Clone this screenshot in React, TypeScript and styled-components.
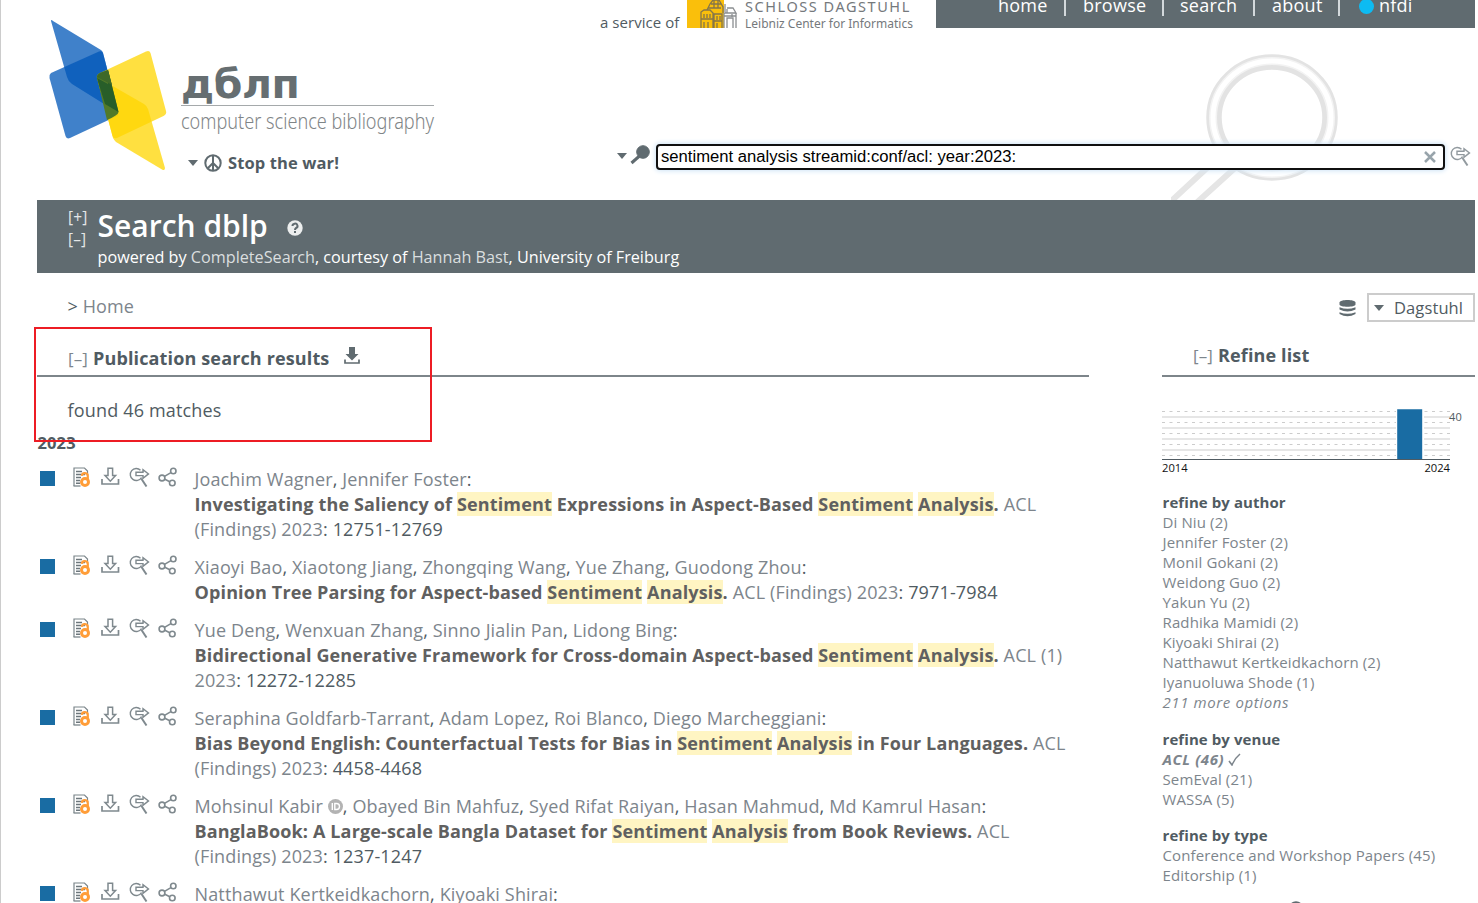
import React from "react";
import styled, { createGlobalStyle } from "styled-components";

const slate = "#606b70";
const text = "#505b62";
const link = "#7d858c";

const Global = createGlobalStyle`
  * { box-sizing: border-box; }
  body { margin: 0; background: #fff; overflow: hidden; }
`;

const Page = styled.div`
  position: relative;
  width: 1478px;
  height: 903px;
  overflow: hidden;
  padding-right: 3px;
  border-left: 1px solid #ccc;
  background: #fff;
  color: ${text};
  font-family: "Open Sans", "Noto Sans", sans-serif;
  font-size: 18px;
  line-height: 25px;
  letter-spacing: 0.11px;
  white-space: nowrap;
`;

const Header = styled.header`
  position: relative;
  display: flex;
  height: 200px;
  padding-left: 48px;
`;

const Lens = styled.svg`
  position: absolute;
  right: 134px;
  top: 50px;
`;

const Emblem = styled.svg`
  flex: none;
  margin-top: 19px;
`;

const Brand = styled.div`
  width: 432px;
  flex: none;
  padding: 60px 0 0 13px;
`;

const Wordmark = styled.div`
  width: 253px;
  height: 46px;
  border-bottom: 1px solid #a5a9ab;
  color: #666e71;
  font-family: "DejaVu Sans", sans-serif;
  font-size: 41px;
  font-weight: 700;
  line-height: 48px;
  letter-spacing: -0.4px;
`;

const Tagline = styled.div`
  color: #7f8587;
  font-family: "Noto Sans", "Open Sans", sans-serif;
  font-weight: 300;
  font-size: 21px;
  line-height: 30px;
  letter-spacing: 0;
  transform-origin: 0 50%;
  transform: scaleX(0.862);
`;

const WarLink = styled.div`
  display: flex;
  align-items: center;
  gap: 6px;
  margin: 13px 0 0 7px;
  font-size: 16.5px;
  line-height: 27px;
  font-weight: 700;
`;

const Right = styled.div`
  position: relative;
  flex: 1;
  display: flex;
  flex-direction: column;
  justify-content: space-between;
`;

const TopBar = styled.div`
  display: flex;
  height: 28px;
`;

const Service = styled.span`
  width: 87px;
  font-size: 15px;
  line-height: 20px;
  padding-top: 12px;
  letter-spacing: 0.05px;
`;

const Castle = styled.svg`
  flex: none;
`;

const SponsorText = styled.div`
  width: 192px;
  height: 28px;
  overflow: hidden;
  color: #75797c;
  font-family: "Noto Sans", sans-serif;
`;

const SponsorName = styled.div`
  margin: -3px 0 0 1px;
  font-size: 14.5px;
  line-height: 18px;
  letter-spacing: 1.55px;
`;

const SponsorSub = styled.div`
  margin-left: 1px;
  font-size: 12px;
  line-height: 17px;
  letter-spacing: 0;
`;

const Nav = styled.nav`
  flex: 1;
  display: flex;
  background: ${slate};
  color: #fff;
  padding-left: 62px;
  line-height: 10px;
  letter-spacing: 0.25px;
`;

const NavItem = styled.span<{ $w: number }>`
  width: ${(p) => p.$w}px;
`;

const Divider = styled.span<{ $w: number }>`
  width: ${(p) => p.$w}px;
  &::before {
    content: "";
    display: block;
    width: 2px;
    height: 16px;
    background: #d3d9dc;
  }
`;

const Dot = styled.span`
  width: 15px;
  height: 15px;
  margin: -1px 5px 0 1px;
  border-radius: 50%;
  background: #0dbbf2;
`;

const SearchRow = styled.div`
  display: flex;
  align-items: flex-start;
  height: 56px;
  padding-left: 17px;
`;

const Caret = styled.i`
  flex: none;
  border: 5.5px solid transparent;
  border-top: 6px solid ${slate};
  border-bottom: 0;
`;

const SearchCaret = styled(Caret)`
  margin: 9px 2px 0 0;
`;

const SearchField = styled.div`
  display: flex;
  align-items: center;
  justify-content: space-between;
  width: 789px;
  height: 26px;
  margin: 0 5px;
  padding: 0 7px 1px 3px;
  border: 2px solid #101010;
  border-radius: 4px;
  background: #fff;
  box-shadow: 0 0 5px 1px #cfe4f6;
  color: #000;
  font-family: "Liberation Sans", sans-serif;
  font-size: 16.65px;
  letter-spacing: 0;
`;

const Goto = styled.span`
  height: 21px;
  padding-top: 2px;
  line-height: 0;
  color: #929a9f;
`;

const Band = styled.section`
  display: flex;
  height: 73px;
  margin-left: 36px;
  padding: 6px 0 0 31px;
  background: ${slate};
  color: #fff;
`;

const Toggles = styled.div`
  width: 29.5px;
  font-size: 15.5px;
  line-height: 22px;
  color: #e4e7e8;
`;

const BandTitle = styled.h1`
  display: flex;
  align-items: center;
  gap: 19px;
  margin: 0;
  font-size: 30px;
  line-height: 40px;
  font-weight: 600;
  letter-spacing: 0;
  svg { margin-top: 4px; }
`;

const Powered = styled.div`
  font-size: 16.2px;
  line-height: 22px;
  letter-spacing: 0;
  a { color: #dadedf; }
`;

const Crumbs = styled.div`
  display: flex;
  justify-content: space-between;
  height: 54px;
  padding: 20px 0 0 66.5px;
  line-height: 27px;
`;

const Mirror = styled.div`
  display: flex;
  align-items: center;
  gap: 11px;
  height: 29px;
`;

const Select = styled.div`
  display: flex;
  align-items: center;
  gap: 10px;
  width: 108px;
  height: 29px;
  padding-left: 5px;
  border: 2px solid #ccc;
  font-size: 16.5px;
`;

const Muted = styled.span`
  color: ${link};
`;

const Columns = styled.main`
  display: flex;
  justify-content: space-between;
  padding-left: 36px;
`;

const Results = styled.section`
  width: 1052px;
`;

const SectionHead = styled.h2<{ $top: number }>`
  display: flex;
  align-items: center;
  height: 50px;
  margin: 0;
  padding: ${(p) => p.$top}px 0 0 31px;
  border-bottom: 2px solid #7d858a;
  font-size: 18px;
  font-weight: 700;
  letter-spacing: 0.14px;
`;

const Fold = styled.span`
  width: 25px;
  color: ${link};
  font-size: 17px;
  font-weight: 400;
`;

const DownloadIcon = styled.svg`
  margin: -6px 0 0 15px;
`;

const Found = styled.p`
  margin: 21px 0 0 30.5px;
  letter-spacing: 0.17px;
`;

const Year = styled.h3`
  margin: 8px 0 11px 0.5px;
  font-size: 16.5px;
  line-height: 24px;
`;

const Entry = styled.article`
  display: flex;
  margin-bottom: 13px;
`;

const Mark = styled.span`
  width: 15px;
  height: 15px;
  margin: 5px 16px 0 3px;
  background: #196ca3;
`;

const Icons = styled.div`
  display: flex;
  gap: 8.500px;
  width: 123.5px;
  padding: 1px 0 0 0.5px;
  color: #7f898e;
`;

const Cite = styled.div`
  padding-top: 1px;
  margin-bottom: -1px;
  color: ${text};
  letter-spacing: 0.145px;
  b { color: #606060; }
  mark { background: #fff5c3; color: inherit; }
`;

const Orcid = styled.svg`
  vertical-align: -1px;
`;

const Refine = styled.aside`
  width: 313px;
`;

const ChartRow = styled.div`
  display: flex;
  align-items: flex-start;
  margin-top: 31px;
  height: 53px;
  font-size: 11px;
  line-height: 18px;
  svg { margin-right: -1px; }
`;

const Years = styled.div`
  display: flex;
  justify-content: space-between;
  width: 288px;
  color: #111;
  font-size: 11.2px;
  line-height: 14px;
  letter-spacing: 0;
`;

const Facets = styled.div`
  margin: 17px 0 0 0.5px;
  font-size: 15px;
  line-height: 20px;
  letter-spacing: 0.12px;
`;

const Facet = styled.div<{ $gap: number }>`
  display: flex;
  flex-direction: column;
  margin-bottom: ${(p) => p.$gap}px;
  color: ${link};
  b { color: ${text}; letter-spacing: 0.08px; }
  i, em { letter-spacing: 0.6px; }
`;

const FacetHelp = styled.b`
  display: flex;
  gap: 5px;
  svg { margin-top: -1px; }
`;

const Selected = styled.em`
  display: flex;
  align-items: center;
  gap: 4px;
  font-weight: 700;
`;

const Callout = styled.div`
  position: absolute;
  left: 33px;
  top: 327px;
  width: 398px;
  height: 115px;
  border: 2px solid #ed1c24;
`;

const Help = ({ disc, mark }: { disc: string; mark: string }) => (
  <svg width="16" height="16" viewBox="0 0 16 16">
    <circle cx="8" cy="8" r="7.700" fill={disc} />
    <path d="M5.500 6a2.500 2.300 0 1 1 3.600 2Q8 8.600 8 10M8 11v2" fill="none" stroke={mark} strokeWidth="2" />
  </svg>
);

const Export = () => (
  <svg width="20" height="20" viewBox="0 0 20 20" fill="none" stroke="currentColor" strokeWidth="1.5">
    <path d="M8 1.200h4.600v7.300h3L10.300 14.200 5 8.500h3z" />
    <path d="M2 12v5h16.500v-5" strokeWidth="1.700" />
  </svg>
);

const Ask = () => (
  <svg width="21" height="20" viewBox="0 0 21 20" fill="none" stroke="currentColor" strokeWidth="1.4">
    <path d="M11.500 3.200A6 6 0 1 0 12.500 10.500" />
    <path d="M7 5.200h7V2.600l5.500 4.300-5.500 4.300V8.600H7z" />
    <path d="M12.200 11.500l5.300 8" strokeWidth="2" />
  </svg>
);

const Share = () => (
  <svg width="20" height="20" viewBox="0 0 20 20" fill="none" stroke="currentColor" strokeWidth="1.6">
    <circle cx="4" cy="11" r="2.900" />
    <circle cx="15.300" cy="4" r="2.700" />
    <circle cx="14.300" cy="16" r="2.800" />
    <path d="M6.500 9.400l6.400-3.800M6.800 12.200l5 2.500" />
  </svg>
);

const OpenDoc = () => (
  <svg width="20" height="20" viewBox="0 0 20 20" fill="none">
    <path d="M2 19V1h10.500l3 3v5" stroke="#7b858a" strokeWidth="1.200" />
    <path d="M1.500 19h7" stroke="#7b858a" strokeWidth="1.300" />
    <path d="M4 4.500h6M4 7.500h9M4 10.500h5M4 13.500h4M4 16.200h4" stroke="#6d777c" strokeWidth="1.400" />
    <path d="M9.800 8.800a3 3 0 0 1 6 0.500V13" stroke="#ff9d38" strokeWidth="2.200" />
    <circle cx="13" cy="15" r="3.500" stroke="#ff9d38" strokeWidth="3" />
  </svg>
);

const S = () => <mark>Sentiment</mark>;
const A = () => <mark>Analysis</mark>;

const Authors = ({ names }: { names: string[] }) => (
  <>
    {names.map((n, i) => (
      <React.Fragment key={n}>
        <Muted>{n}</Muted>
        {n === "Mohsinul Kabir" && (
          <>
            {" "}
            <Orcid width="15" height="15" viewBox="0 0 15 15">
              <circle cx="7.500" cy="7.500" r="7.500" fill="#b3b3b3" />
              <path d="M4.300 4v7M6.800 4.500h1.700a2.900 2.900 0 0 1 0 6H6.800z" fill="none" stroke="#fff" strokeWidth="1.400" />
            </Orcid>
          </>
        )}
        {i < names.length - 1 ? ", " : ":"}
      </React.Fragment>
    ))}
  </>
);

const entries: { names: string[]; title: React.ReactNode; rest?: React.ReactNode }[] = [
  {
    names: ["Joachim Wagner", "Jennifer Foster"],
    title: <><b>Investigating the Saliency of <S /> Expressions in Aspect-Based <S /> <A />.</b> <Muted>ACL</Muted></>,
    rest: <><Muted>(Findings) 2023</Muted>: 12751-12769</>,
  },
  {
    names: ["Xiaoyi Bao", "Xiaotong Jiang", "Zhongqing Wang", "Yue Zhang", "Guodong Zhou"],
    title: <><b>Opinion Tree Parsing for Aspect-based <S /> <A />.</b> <Muted>ACL (Findings) 2023</Muted>: 7971-7984</>,
  },
  {
    names: ["Yue Deng", "Wenxuan Zhang", "Sinno Jialin Pan", "Lidong Bing"],
    title: <><b>Bidirectional Generative Framework for Cross-domain Aspect-based <S /> <A />.</b> <Muted>ACL (1)</Muted></>,
    rest: <><Muted>2023</Muted>: 12272-12285</>,
  },
  {
    names: ["Seraphina Goldfarb-Tarrant", "Adam Lopez", "Roi Blanco", "Diego Marcheggiani"],
    title: <><b>Bias Beyond English: Counterfactual Tests for Bias in <S /> <A /> in Four Languages.</b> <Muted>ACL</Muted></>,
    rest: <><Muted>(Findings) 2023</Muted>: 4458-4468</>,
  },
  {
    names: ["Mohsinul Kabir", "Obayed Bin Mahfuz", "Syed Rifat Raiyan", "Hasan Mahmud", "Md Kamrul Hasan"],
    title: <><b>BanglaBook: A Large-scale Bangla Dataset for <S /> <A /> from Book Reviews.</b> <Muted>ACL</Muted></>,
    rest: <><Muted>(Findings) 2023</Muted>: 1237-1247</>,
  },
  { names: ["Natthawut Kertkeidkachorn", "Kiyoaki Shirai"], title: null },
];

const authorFacets = [
  "Di Niu (2)", "Jennifer Foster (2)", "Monil Gokani (2)", "Weidong Guo (2)", "Yakun Yu (2)",
  "Radhika Mamidi (2)", "Kiyoaki Shirai (2)", "Natthawut Kertkeidkachorn (2)", "Iyanuoluwa Shode (1)",
];

export default function App() {
  return (
    <Page>
      <Global />
      <Header>
        <Lens width="170" height="150" viewBox="0 -4 170 150" fill="none">
          <path d="M37 113L-3 150M65 113L22 152" stroke="#e5e5e5" strokeWidth="6" />
          <ellipse cx="101" cy="63.500" rx="58" ry="55.500" stroke="#e3e3e3" strokeWidth="15.500" />
          <ellipse cx="101" cy="63.500" rx="59" ry="56.500" stroke="#f3f3f3" strokeWidth="8" />
          <ellipse cx="101" cy="63.500" rx="59" ry="56.500" stroke="#fff" strokeWidth="5" />
        </Lens>
        <Emblem width="119" height="153" viewBox="49 19 119 153">
          <g strokeLinejoin="round">
            <path d="M53 21L101 50Q102.500 51 103 53L118.500 113L72 84Q68 81 67 77L51 21Q51 19 53 21Z" fill="#0057b8" fillOpacity=".75" />
            <path d="M51 73L99 51.500Q102 50.500 103 53L118.500 112Q119 115 116 116.500L70 138Q66.500 139.500 65.500 136L49.500 78Q49 74.500 51 73Z" fill="#0057b8" fillOpacity=".75" />
            <path d="M100 73L146 51.500Q149.500 50 150.500 53L166 111Q167 114 163.500 116L117 138Q113.500 139 112.500 136L97 78Q96 75 100 73Z" fill="#ffd500" fillOpacity=".75" />
            <path d="M97 77L144 104Q147 106 148 109L165 168Q165 171 162 169.500L116 142Q114 140 113 138Z" fill="#ffd500" fillOpacity=".75" />
            <path d="M108 70L118.500 112Q118.500 115 107 120L97 78Q96 75 100 73Z" fill="#527a29" />
            <path d="M108 70L118.500 112L105 104L97 78L108 84Z" fill="#285e29" />
            <path d="M100 73L108 70L112 85L97 77Q97 75 100 73Z" fill="#3e6929" />
          </g>
        </Emblem>
        <Brand>
          <Wordmark>дблп</Wordmark>
          <Tagline>computer science bibliography</Tagline>
          <WarLink>
            <Caret />
            <svg width="18" height="18" viewBox="0 0 18 18" fill="none" stroke={slate} strokeWidth="2">
              <circle cx="9" cy="9" r="7.700" />
              <path d="M9 1v16M9 9l-5.500 5.500M9 9l5.500 5.500" />
            </svg>
            Stop the war!
          </WarLink>
        </Brand>
        <Right>
          <TopBar>
            <Service>a service of</Service>
            <Castle width="57" height="28" viewBox="0 0 57 28" fill="none" stroke="#85754a" strokeWidth="1.300">
              <path d="M0 0h37v28H0z" fill="#fabf0b" stroke="none" />
              <path d="M14 28V12l3-2h6l3 3v15M20 10l3-6 3-4h6l4 7v6M21 8h13M24 4h10M27 0v8M31 0v8M17 14v4M20 14v4M23 14v4M14 19h12M17 22v6M21 22v6M27 28V14h8v14M30 16v4M33 16v4M27 21h8M30 23v5" />
              <path d="M38 4v9h11l-3-5h-6M37 13v15M49 13v15M40 28V18h6v10M37 16h12M40 9v4M45 14v3" stroke="#8b8e91" />
            </Castle>
            <SponsorText>
              <SponsorName>SCHLOSS DAGSTUHL</SponsorName>
              <SponsorSub>Leibniz Center for Informatics</SponsorSub>
            </SponsorText>
            <Nav>
              <NavItem $w={66}>home</NavItem>
              <Divider $w={19} />
              <NavItem $w={79}>browse</NavItem>
              <Divider $w={18} />
              <NavItem $w={73}>search</NavItem>
              <Divider $w={19} />
              <NavItem $w={66}>about</NavItem>
              <Divider $w={20} />
              <Dot />
              <span>nfdi</span>
            </Nav>
          </TopBar>
          <SearchRow>
            <SearchCaret />
            <svg width="22" height="22" viewBox="0 0 22 22" stroke={slate} fill={slate}>
              <circle cx="14" cy="8" r="6.300" />
              <path d="M10.500 12L2.500 19" strokeWidth="3" />
            </svg>
            <SearchField>
              <span>sentiment analysis streamid:conf/acl: year:2023:</span>
              <svg width="12" height="12" viewBox="0 0 12 12" stroke="#98a4ab" strokeWidth="2.500">
                <path d="M1 1l10 10M11 1L1 11" />
              </svg>
            </SearchField>
            <Goto><Ask /></Goto>
          </SearchRow>
        </Right>
      </Header>

      <Band>
        <Toggles>[+]<br />[–]</Toggles>
        <div>
          <BandTitle>
            Search dblp
            <Help disc="#eceeee" mark={slate} />
          </BandTitle>
          <Powered>
            powered by <a>CompleteSearch</a>, courtesy of <a>Hannah Bast</a>, University of Freiburg
          </Powered>
        </div>
      </Band>

      <Crumbs>
        <div>&gt; <Muted>Home</Muted></div>
        <Mirror>
          <svg width="17" height="18" viewBox="0 0 17 18" fill={slate}>
            <path d="M0.500 3.500C0.500 0 16.500 0 16.500 3.500V5.500C16.500 8.500 0.500 8.500 0.500 5.500Z" />
            <path d="M0.500 8.300Q8.500 11.300 16.500 8.300V10.500Q8.500 14.500 0.500 10.500Z" />
            <path d="M0.500 13.200Q8.500 16.200 16.500 13.200V15Q8.500 19.500 0.500 15Z" />
          </svg>
          <Select><Caret />Dagstuhl</Select>
        </Mirror>
      </Crumbs>

      <Columns>
        <Results>
          <SectionHead $top={14}>
            <Fold>[–]</Fold>
            Publication search results
            <DownloadIcon width="16" height="17" viewBox="0 0 16 17" fill={slate}>
              <path d="M5 0h6v7h3.500L8 13.500 1.500 7H5z" />
              <path d="M1 12.500v3.500h14v-3.500" fill="none" stroke={slate} strokeWidth="1.700" />
            </DownloadIcon>
          </SectionHead>
          <Found>found 46 matches</Found>
          <Year>2023</Year>
          {entries.map((e) => (
            <Entry key={e.names[0]}>
              <Mark />
              <Icons><OpenDoc /><Export /><Ask /><Share /></Icons>
              <Cite>
                <div><Authors names={e.names} /></div>
                <div>{e.title}</div>
                {e.rest && <div>{e.rest}</div>}
              </Cite>
            </Entry>
          ))}
        </Results>

        <Refine>
          <SectionHead $top={8}><Fold>[–]</Fold>Refine list</SectionHead>
          <ChartRow>
            <svg width="288" height="52" viewBox="0 0 288 52" fill="none">
              <path d="M0 9h288M0 20h288M0 31h288M0 42h288" stroke="#dedede" strokeWidth="1.600" />
              <path d="M0 3.500h288M0 14.500h288M0 25.500h288M0 36.500h288M0 47.500h288" stroke="#ccc" strokeDasharray="3 4.500" />
              <path d="M234 1h28v50h-28z" fill="#fff" />
              <path d="M235.200 1.300h25v50h-25z" fill="#196ca3" />
              <path d="M0 51.500h288" stroke="#505b62" />
            </svg>
            40
          </ChartRow>
          <Years><span>2014</span><span>2024</span></Years>
          <Facets>
            <Facet $gap={17}>
              <b>refine by author</b>
              {authorFacets.map((f) => <span key={f}>{f}</span>)}
              <i>211 more options</i>
            </Facet>
            <Facet $gap={16}>
              <b>refine by venue</b>
              <Selected>ACL (46)
                <svg width="13" height="13" viewBox="0 0 13 13" fill="none" stroke={link} strokeWidth="1.600">
                  <path d="M1 8l3 4Q7 5 12 1" />
                </svg>
              </Selected>
              <span>SemEval (21)</span>
              <span>WASSA (5)</span>
            </Facet>
            <Facet $gap={17}>
              <b>refine by type</b>
              <span>Conference and Workshop Papers (45)</span>
              <span>Editorship (1)</span>
            </Facet>
            <Facet $gap={0}>
              <FacetHelp>refine by access <Help disc={slate} mark="#fff" /></FacetHelp>
            </Facet>
          </Facets>
        </Refine>
      </Columns>
      <Callout />
    </Page>
  );
}
